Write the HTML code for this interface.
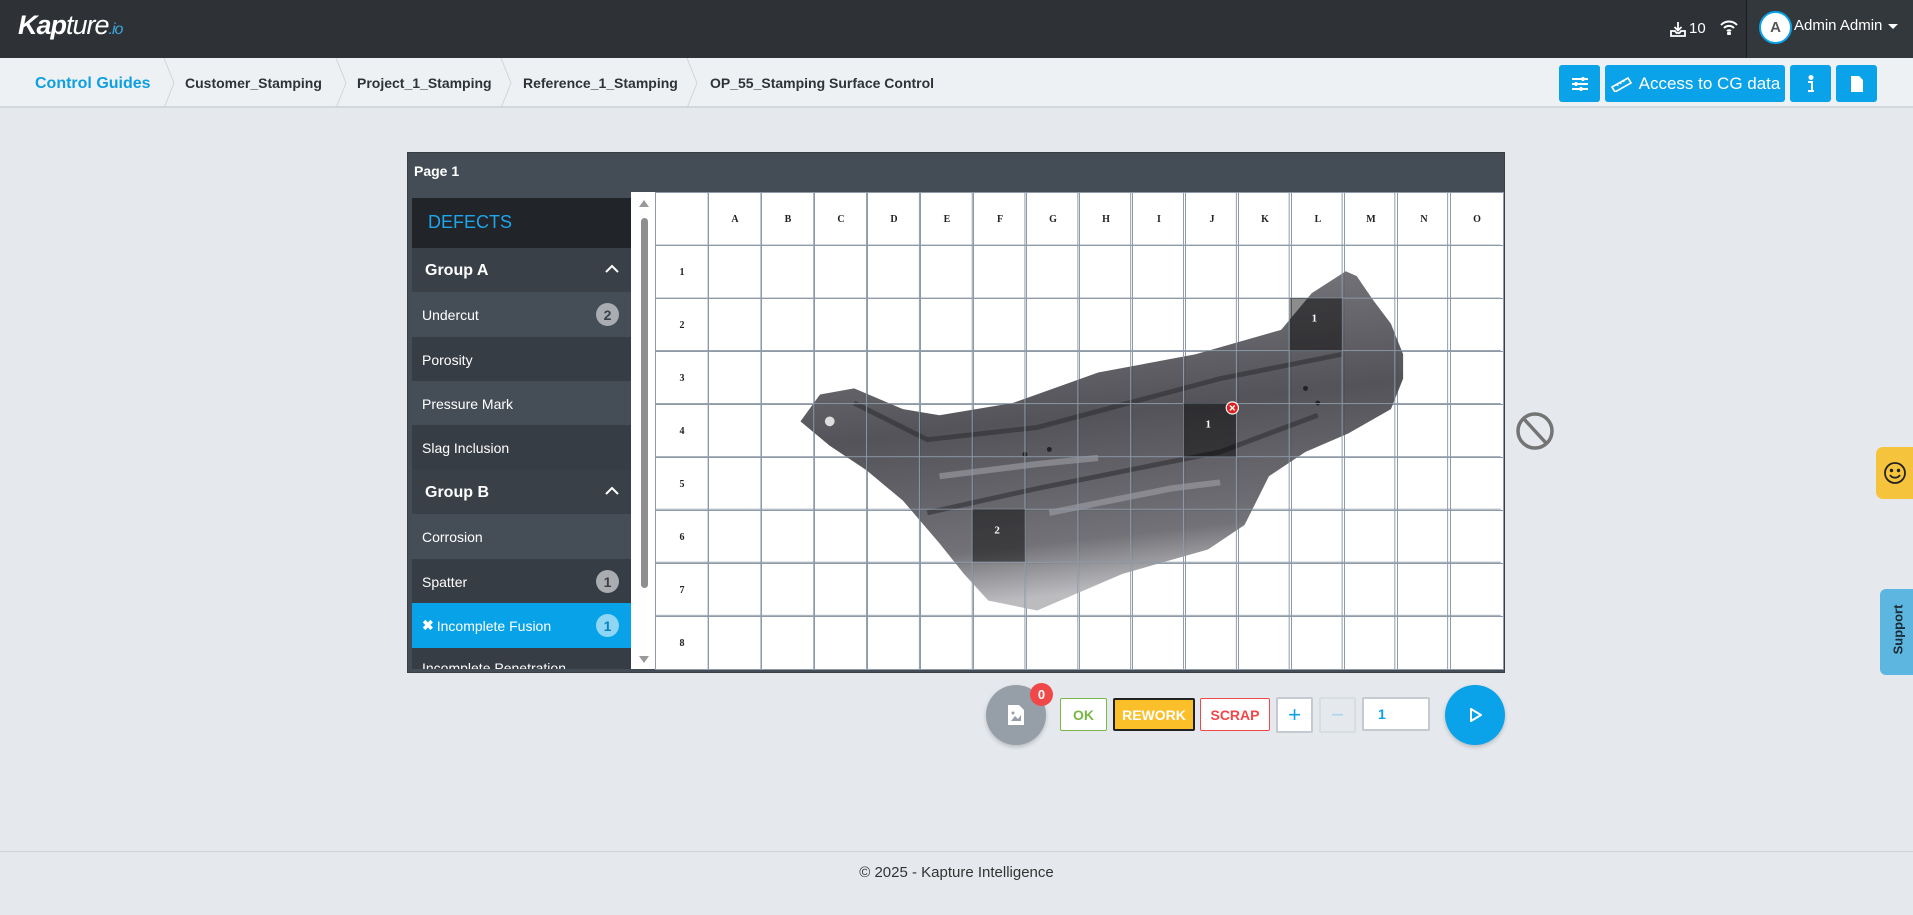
<!DOCTYPE html>
<html><head><meta charset="utf-8"><style>
*{box-sizing:border-box;margin:0;padding:0}
body{width:1913px;height:915px;overflow:hidden;background:#e5e9ed;font-family:"Liberation Sans",sans-serif;position:relative}
.abs{position:absolute}
#hdr{left:0;top:0;width:1913px;height:58px;background:#2e3236}
#bc{left:0;top:58px;width:1913px;height:50px;background:#eef1f4;border-bottom:2px solid #d3d8dc}
.crumb{position:absolute;top:17px;font-size:14px;font-weight:bold;color:#2d3338;font-family:"Liberation Sans",sans-serif}
.sep{position:absolute;top:0;width:12px;height:50px}
.btn{position:absolute;top:65px;height:37px;background:#0aa2e8;border-radius:3px;color:#fff;display:flex;align-items:center;justify-content:center;font-size:17px}
#panel{left:407px;top:152px;width:1098px;height:521px;background:#444d56;border:1px solid #3a3f44}
.item{position:absolute;left:412px;width:219px;height:45px;color:#fff;font-size:14px;padding-left:10px;display:flex;align-items:center;font-family:"Liberation Sans",sans-serif}
.badge{position:absolute;right:12px;top:11px;width:23px;height:23px;border-radius:50%;background:#a9adb1;color:#3a4047;font-weight:bold;font-size:14px;display:flex;align-items:center;justify-content:center}
.grp{font-weight:bold;font-size:16px}
.chev{position:absolute;right:12px;top:16px}
table{border-collapse:collapse;position:absolute;left:655px;top:192px;background:#fff;table-layout:fixed}
td{width:53px;height:53px;border:1px solid #8e9aa8;text-align:center;font-family:"Liberation Serif",serif;font-weight:bold;font-size:10px;color:#222}
.cb{position:absolute;top:698px;height:33px;border-radius:2px;display:flex;align-items:center;justify-content:center;font-weight:bold;font-size:14px;background:#fff}
</style></head><body>
<div id="hdr" class="abs">
 <div class="abs" style="left:18px;top:10px;color:#fff;font-size:27px;font-style:italic;letter-spacing:-1px"><b>Kap</b>ture<span style="color:#3aa7e0;font-size:16px">.io</span></div>
 <svg class="abs" style="left:1669px;top:20px" width="18" height="18" viewBox="0 0 18 18" fill="none" stroke="#fff" stroke-width="1.8"><path d="M9 2v8M5.5 7L9 10.5 12.5 7M2 11v5h14v-5h-4l-1.5 2h-3L6 11z"/></svg>
 <div class="abs" style="left:1689px;top:20px;color:#fff;font-size:15px">10</div>
 <svg class="abs" style="left:1719px;top:19px" width="20" height="16" viewBox="0 0 20 16" fill="none" stroke="#fff" stroke-width="2"><path d="M2 6a11 11 0 0 1 16 0M5 9a7 7 0 0 1 10 0M8 12a3 3 0 0 1 4 0"/><circle cx="10" cy="14.5" r="1" fill="#fff"/></svg>
 <div class="abs" style="left:1746px;top:0;width:167px;height:58px;background:#33383c;border-left:1px solid #1c1f22"></div>
 <div class="abs" style="left:1759px;top:11px;width:33px;height:33px;border-radius:50%;background:#fff;border:2px solid #0aa2e8;color:#555;font-weight:bold;font-size:15px;display:flex;align-items:center;justify-content:center">A</div>
 <div class="abs" style="left:1794px;top:17px;color:#fff;font-size:15px">Admin Admin</div>
 <div class="abs" style="left:1888px;top:24px;border:5px solid transparent;border-top-color:#fff"></div>
</div>
<div id="bc" class="abs">
 <div class="crumb" style="left:35px;color:#0ea0e0;font-size:16px">Control Guides</div>
 <svg class="sep" style="left:163px" viewBox="0 0 12 50"><path d="M1 0L11 25 1 50" fill="none" stroke="#d0d5da"/></svg>
 <div class="crumb" style="left:185px">Customer_Stamping</div>
 <svg class="sep" style="left:335px" viewBox="0 0 12 50"><path d="M1 0L11 25 1 50" fill="none" stroke="#d0d5da"/></svg>
 <div class="crumb" style="left:357px">Project_1_Stamping</div>
 <svg class="sep" style="left:500px" viewBox="0 0 12 50"><path d="M1 0L11 25 1 50" fill="none" stroke="#d0d5da"/></svg>
 <div class="crumb" style="left:523px">Reference_1_Stamping</div>
 <svg class="sep" style="left:686px" viewBox="0 0 12 50"><path d="M1 0L11 25 1 50" fill="none" stroke="#d0d5da"/></svg>
 <div class="crumb" style="left:710px">OP_55_Stamping Surface Control</div>
</div>
<div class="btn" style="left:1559px;width:41px"><svg width="18" height="16" viewBox="0 0 18 16" stroke="#fff" stroke-width="2"><path d="M1 3h16M1 8h16M1 13h16"/><path d="M12 1v4M5 6v4M10 11v4" stroke-width="2.5"/></svg></div>
<div class="btn" style="left:1605px;width:180px"><svg width="24" height="16" viewBox="0 0 24 16" fill="none" stroke="#fff" stroke-width="1.6" style="margin-right:5px"><path d="M2 11L18 2l3 5L5 16z"/><path d="M7 8l1 2M10 6l1 2M13 4l1 2"/></svg>Access to CG data</div>
<div class="btn" style="left:1790px;width:41px"><svg width="10" height="18" viewBox="0 0 10 18" fill="none" stroke="#fff" stroke-width="2"><circle cx="5" cy="2.5" r="1.5" fill="#fff"/><path d="M2 7h4v9M2 16h6"/></svg></div>
<div class="btn" style="left:1836px;width:41px"><svg width="14" height="18" viewBox="0 0 14 18"><path d="M1 1h8l4 4v12H1z" fill="#fff"/></svg></div>

<div id="panel" class="abs"></div>
<div class="abs" style="left:414px;top:163px;color:#fff;font-weight:bold;font-size:14px">Page 1</div>
<div class="abs" style="left:412px;top:198px;width:219px;height:50px;background:#212529;color:#1ea5ea;font-size:18px;padding:14px 0 0 16px">DEFECTS</div>
<div class="item grp" style="top:248px;background:#394047;padding-left:13px">Group A<svg class="chev" width="14" height="9" viewBox="0 0 14 9" fill="none" stroke="#fff" stroke-width="2"><path d="M1 8l6-6 6 6"/></svg></div>
<div class="item" style="top:292px;background:#454e57">Undercut<div class="badge">2</div></div>
<div class="item" style="top:337px;background:#373d44">Porosity</div>
<div class="item" style="top:381px;background:#454e57">Pressure Mark</div>
<div class="item" style="top:425px;background:#373d44">Slag Inclusion</div>
<div class="item grp" style="top:470px;background:#394047;padding-left:13px">Group B<svg class="chev" width="14" height="9" viewBox="0 0 14 9" fill="none" stroke="#fff" stroke-width="2"><path d="M1 8l6-6 6 6"/></svg></div>
<div class="item" style="top:514px;background:#454e57">Corrosion</div>
<div class="item" style="top:559px;background:#373d44">Spatter<div class="badge">1</div></div>
<div class="item" style="top:603px;background:#08a2e8"><b style="margin-right:3px">✖</b>Incomplete Fusion<div class="badge" style="background:#8fd6f5;color:#0a80c0">1</div></div>
<div class="item" style="top:648px;height:21px;background:#373d44;align-items:flex-start;padding-top:14px;overflow:hidden;font-size:14px"><span style="margin-top:-2px">Incomplete Penetration</span></div>
<div class="abs" style="left:631px;top:192px;width:24px;height:477px;background:#fff"></div>
<div class="abs" style="left:641px;top:218px;width:7px;height:370px;border-radius:4px;background:#8e8e8e"></div>
<div class="abs" style="left:639px;top:200px;border:5px solid transparent;border-bottom:7px solid #999;border-top:0"></div>
<div class="abs" style="left:639px;top:656px;border:5px solid transparent;border-top:7px solid #999;border-bottom:0"></div>

<table>
<tr><td></td><td>A</td><td>B</td><td>C</td><td>D</td><td>E</td><td>F</td><td>G</td><td>H</td><td>I</td><td>J</td><td>K</td><td>L</td><td>M</td><td>N</td><td>O</td></tr>
<tr><td>1</td><td></td><td></td><td></td><td></td><td></td><td></td><td></td><td></td><td></td><td></td><td></td><td></td><td></td><td></td><td></td></tr>
<tr><td>2</td><td></td><td></td><td></td><td></td><td></td><td></td><td></td><td></td><td></td><td></td><td></td><td></td><td></td><td></td><td></td></tr>
<tr><td>3</td><td></td><td></td><td></td><td></td><td></td><td></td><td></td><td></td><td></td><td></td><td></td><td></td><td></td><td></td><td></td></tr>
<tr><td>4</td><td></td><td></td><td></td><td></td><td></td><td></td><td></td><td></td><td></td><td></td><td></td><td></td><td></td><td></td><td></td></tr>
<tr><td>5</td><td></td><td></td><td></td><td></td><td></td><td></td><td></td><td></td><td></td><td></td><td></td><td></td><td></td><td></td><td></td></tr>
<tr><td>6</td><td></td><td></td><td></td><td></td><td></td><td></td><td></td><td></td><td></td><td></td><td></td><td></td><td></td><td></td><td></td></tr>
<tr><td>7</td><td></td><td></td><td></td><td></td><td></td><td></td><td></td><td></td><td></td><td></td><td></td><td></td><td></td><td></td><td></td></tr>
<tr><td>8</td><td></td><td></td><td></td><td></td><td></td><td></td><td></td><td></td><td></td><td></td><td></td><td></td><td></td><td></td><td></td></tr>
</table>
<svg class="abs" style="left:655px;top:192px" width="846" height="477" viewBox="537 157 693 391">
<defs><linearGradient id="g" x1="0" y1="0" x2="0.2" y2="1"><stop offset="0" stop-color="#7c7c82"/><stop offset="0.5" stop-color="#4a4a50"/><stop offset="0.85" stop-color="#6a6a70"/><stop offset="1" stop-color="#b8b8bc"/></linearGradient></defs>
<path d="M656 345L672 323 700 318 740 335 770 340 830 330 900 305 980 290 1050 270 1075 240 1103 222 1112 226 1125 245 1140 265 1150 290 1150 310 1140 335 1105 355 1070 370 1040 390 1020 430 990 450 920 470 850 500 810 492 790 470 770 445 740 410 710 385 680 365Z" fill="url(#g)" opacity="0.95"/>
<path d="M700 330L760 360 850 350 1000 310 1100 290M760 420L850 400 1000 370 1080 340" stroke="#2e2e34" stroke-width="4" fill="none" opacity="0.6"/>
<path d="M770 390L850 380 900 375M860 420L960 400 1000 395" stroke="#a0a0a6" stroke-width="5" fill="none" opacity="0.6"/>
<g fill="#222"><circle cx="680" cy="345" r="4" fill="#ddd"/><circle cx="840" cy="372" r="2"/><circle cx="860" cy="368" r="2"/><circle cx="1070" cy="318" r="2"/><circle cx="1080" cy="330" r="2"/></g>
<g stroke="#8e9aa8" stroke-width="0.8"><path d="M537 200.5H1230M537 244H1230M537 287H1230M537 330.5H1230M537 374H1230M537 417H1230M537 460.5H1230M537 504H1230"/><path d="M580.3 157V548M623.6 157V548M666.9 157V548M710.2 157V548M753.5 157V548M796.8 157V548M840 157V548M883.4 157V548M926.7 157V548M970 157V548M1013.3 157V548M1056.6 157V548M1100 157V548M1143.2 157V548M1186.5 157V548"/></g>
<rect x="1057" y="244" width="43" height="43" fill="#000" opacity="0.45"/>
<rect x="970" y="330" width="43" height="44" fill="#000" opacity="0.45"/>
<rect x="797" y="417" width="43" height="43" fill="#000" opacity="0.45"/>
<g fill="#fff" font-family="Liberation Serif" font-weight="bold" font-size="9"><text x="1075" y="263">1</text><text x="988" y="350">1</text><text x="815" y="437">2</text></g>
<circle cx="1010" cy="334" r="5" fill="#e02020" stroke="#fff" stroke-width="1"/><path d="M1008 332l4 4M1012 332l-4 4" stroke="#fff" stroke-width="1.2"/>
</svg>
<svg class="abs" style="left:1516px;top:411px" width="40" height="40" viewBox="0 0 40 40" fill="none" stroke="#747474" stroke-width="3.5"><circle cx="19" cy="20" r="17"/><path d="M8 8l22 24"/></svg>

<div class="abs" style="left:986px;top:685px;width:60px;height:60px;border-radius:50%;background:#969fa7;box-shadow:0 2px 4px rgba(0,0,0,.2)"><svg style="position:absolute;left:21px;top:19px" width="18" height="22" viewBox="0 0 18 22"><path d="M1 1h11l5 5v15H1z" fill="#fff"/><path d="M4 17l4-5 3 3 3-4v6z" fill="#969fa7"/><circle cx="6" cy="9" r="1.5" fill="#969fa7"/></svg></div>
<div class="abs" style="left:1030px;top:683px;width:23px;height:23px;border-radius:50%;background:#f04848;color:#fff;font-weight:bold;font-size:13px;display:flex;align-items:center;justify-content:center">0</div>
<div class="cb" style="left:1060px;width:47px;border:1px solid #7ab648;color:#7ab648">OK</div>
<div class="cb" style="left:1113px;width:82px;background:#fbbf2a;border:2px solid #222;color:#fff">REWORK</div>
<div class="cb" style="left:1200px;width:70px;border:1px solid #f04848;color:#f04848">SCRAP</div>
<div class="cb" style="left:1276px;width:37px;height:36px;top:697px;border:2px solid #c4cad0;color:#0aa2e8;font-size:22px;font-weight:normal">+</div>
<div class="cb" style="left:1319px;width:37px;height:36px;top:697px;border:2px solid #d8dde2;background:#e5e9ed;color:#a7d4ee;font-size:22px;font-weight:normal">−</div>
<div class="cb" style="left:1362px;width:68px;height:34px;top:697px;border:2px solid #c4cad0;color:#0aa2e8;justify-content:flex-start;padding-left:14px">1</div>
<div class="abs" style="left:1445px;top:685px;width:60px;height:60px;border-radius:50%;background:#0aa2e8;box-shadow:0 2px 4px rgba(0,0,0,.2)"><svg style="position:absolute;left:24px;top:22px" width="14" height="16" viewBox="0 0 14 16"><path d="M2 2l10 6-10 6z" fill="none" stroke="#fff" stroke-width="2" stroke-linejoin="round"/></svg></div>

<div class="abs" style="left:1876px;top:447px;width:40px;height:52px;border-radius:7px 0 0 7px;background:#f6c43c"><svg style="position:absolute;left:7px;top:14px" width="24" height="24" viewBox="0 0 24 24" fill="none" stroke="#222" stroke-width="1.8"><circle cx="12" cy="12" r="10"/><circle cx="8.5" cy="9.5" r=".8" fill="#222"/><circle cx="15.5" cy="9.5" r=".8" fill="#222"/><path d="M7 14a6 6 0 0 0 10 0"/></svg></div>
<div class="abs" style="left:1880px;top:589px;width:36px;height:86px;border-radius:6px 0 0 6px;background:#5db6e0"><div style="position:absolute;left:-14px;top:33px;width:64px;transform:rotate(-90deg);font-weight:bold;font-size:13px;color:#1c2a35;text-align:center">Support</div></div>

<div class="abs" style="left:0;top:851px;width:1913px;height:1px;background:#cfd4d9"></div>
<div class="abs" style="left:0;top:864px;width:1913px;text-align:center;font-size:15px;color:#333">© 2025 - Kapture Intelligence</div>
</body></html>
